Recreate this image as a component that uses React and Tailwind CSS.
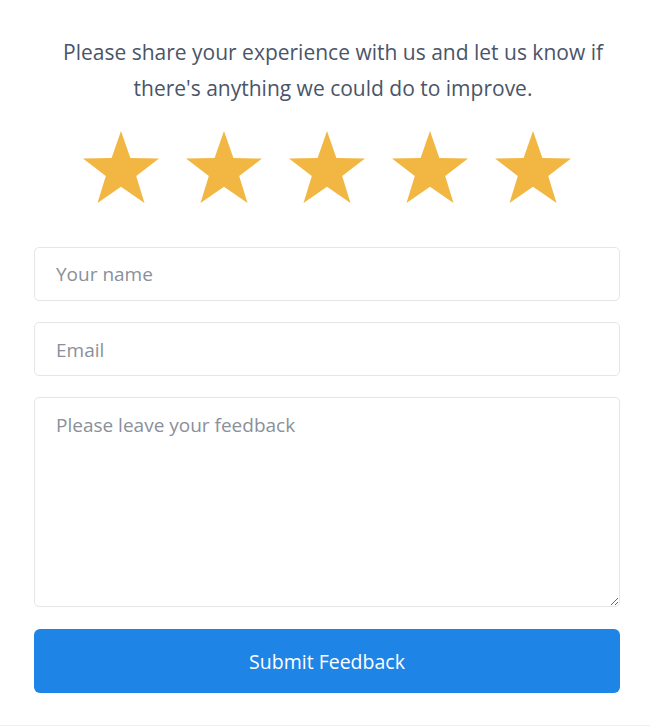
import React, { useState } from 'react';

const Star = () => (
    <svg width="78" height="72" viewBox="0 0 78 72" aria-hidden="true">
        <polygon
            fill="#f2b742"
            points="39,0 48.4,27.1 77,27.6 54.2,44.9 62.5,72 39,55.7 15.5,72 23.8,44.9 1,27.6 29.6,27.1"
        />
    </svg>
);

const App = () => {
    const [name, setName] = useState('');
    const [email, setEmail] = useState('');
    const [feedback, setFeedback] = useState('');

    return (
        <div
            className="w-[650px] min-h-[726px] bg-white pl-[34px] pr-[30px] pt-[34px] border-b border-[#f0f0f0]"
            style={{ fontFamily: '"Open Sans", "Noto Sans", sans-serif' }}
        >
            <p className="text-center text-[21px] leading-[36px] text-[#4a5568] pl-[12px]">
                Please share your experience with us and let us know if there's anything we could do to improve.
            </p>

            <div className="flex justify-center gap-[25px] mt-[25px]">
                {[1, 2, 3, 4, 5].map((n) => (
                    <Star key={n} />
                ))}
            </div>

            <form className="mt-[44px] flex flex-col" onSubmit={(e) => e.preventDefault()}>
                <input
                    value={name}
                    onChange={(e) => setName(e.target.value)}
                    placeholder="Your name"
                    className="h-[54px] w-full rounded-[5px] border border-[#e6e6e6] px-[21px] text-[19px] text-[#4a5568] placeholder:text-[#8a9099] outline-none"
                />
                <input
                    value={email}
                    onChange={(e) => setEmail(e.target.value)}
                    placeholder="Email"
                    className="mt-[21px] h-[54px] w-full rounded-[5px] border border-[#e6e6e6] px-[21px] pt-[2px] text-[19px] text-[#4a5568] placeholder:text-[#8a9099] outline-none"
                />
                <textarea
                    value={feedback}
                    onChange={(e) => setFeedback(e.target.value)}
                    placeholder="Please leave your feedback"
                    className="mt-[21px] h-[210px] w-full rounded-[5px] border border-[#e6e6e6] px-[21px] py-[13px] text-[19px] text-[#4a5568] placeholder:text-[#8a9099] outline-none"
                />
                <button
                    type="submit"
                    className="mt-[22px] h-[64px] w-full rounded-[6px] bg-[#1e84e6] pt-[2px] text-[19.5px] text-white"
                >
                    Submit Feedback
                </button>
            </form>
        </div>
    );
};

export default App;
